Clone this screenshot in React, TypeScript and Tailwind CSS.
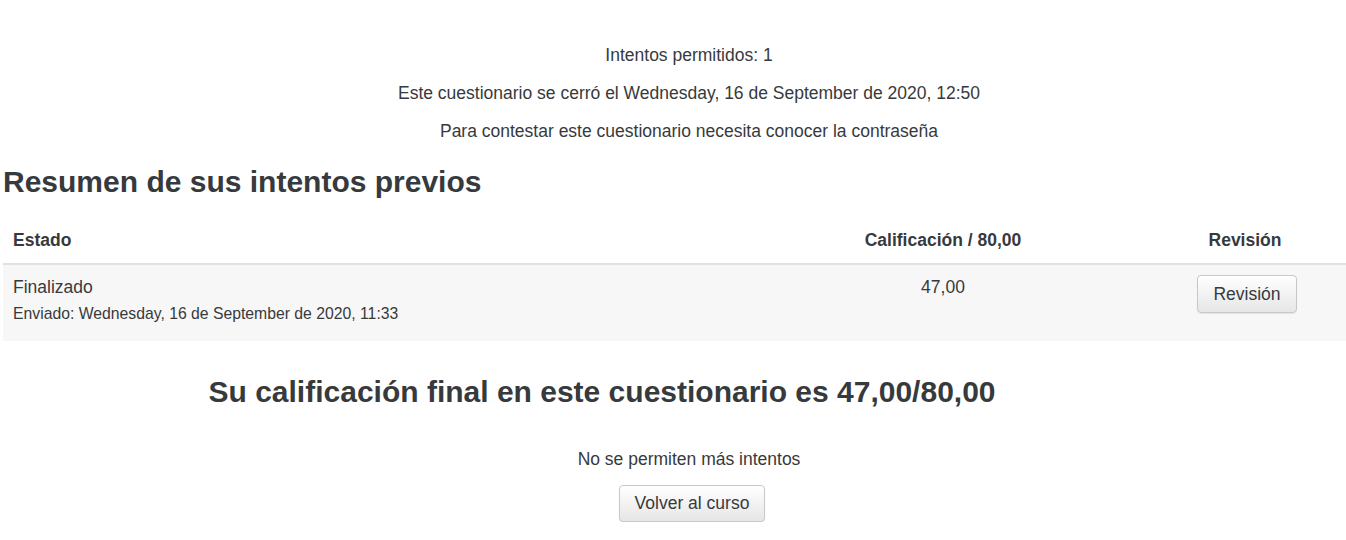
export default function App() {
  return (
    <div className="w-full overflow-hidden bg-white font-['Liberation_Sans',Arial,sans-serif] text-[#373a3c]">
      <div className="ml-[3px] w-[1372px] pt-[44px]">
        <div className="flex flex-col items-center gap-[15px] text-[17.5px] leading-[23px]">
          <p>Intentos permitidos: 1</p>
          <p>Este cuestionario se cerró el Wednesday, 16 de September de 2020, 12:50</p>
          <p>Para contestar este cuestionario necesita conocer la contraseña</p>
        </div>

        <h3 className="mt-[22px] text-[30px] font-bold leading-[34px]">Resumen de sus intentos previos</h3>

        <table className="mt-[17px] w-full border-collapse text-[17.5px] leading-[23px]">
          <thead>
            <tr className="border-b-2 border-[#dee2e6]">
              <th className="w-[768px] px-[10px] pt-[13px] pb-[11px] text-left font-bold">Estado</th>
              <th className="w-[344px] px-[10px] pt-[13px] pb-[11px] text-center font-bold">Calificación / 80,00</th>
              <th className="w-[260px] px-[10px] pt-[13px] pb-[11px] text-center font-bold">Revisión</th>
            </tr>
          </thead>
          <tbody>
            <tr className="bg-[#f7f7f7] align-top">
              <td className="px-[10px] pt-[11px] pb-[16px]">
                <div>Finalizado</div>
                <div className="mt-[4px] text-[15.75px] leading-[22px]">Enviado: Wednesday, 16 de September de 2020, 11:33</div>
              </td>
              <td className="px-[10px] pt-[11px] text-center">47,00</td>
              <td className="px-[10px] pt-[10px] text-center">
                <button className="ml-[4px] h-[38px] rounded-[4px] border border-[#c8c8c8] bg-gradient-to-b from-white to-[#e6e6e6] px-[15px] text-[17.5px] text-[#373a3c] shadow-[0_1px_1px_rgba(0,0,0,0.08)]">
                  Revisión
                </button>
              </td>
            </tr>
          </tbody>
        </table>

        <h3 className="mt-[34px] pr-[174px] text-center text-[30px] font-bold leading-[34px]">
          Su calificación final en este cuestionario es 47,00/80,00
        </h3>

        <div className="mt-[39px] flex flex-col items-center text-[17.5px] leading-[23px]">
          <p>No se permiten más intentos</p>
          <button className="ml-[6px] mt-[14px] h-[37px] rounded-[4px] border border-[#c8c8c8] bg-gradient-to-b from-white to-[#e6e6e6] px-[15px] text-[17.5px] text-[#373a3c] shadow-[0_1px_1px_rgba(0,0,0,0.08)]">
            Volver al curso
          </button>
        </div>
      </div>
    </div>
  );
}
